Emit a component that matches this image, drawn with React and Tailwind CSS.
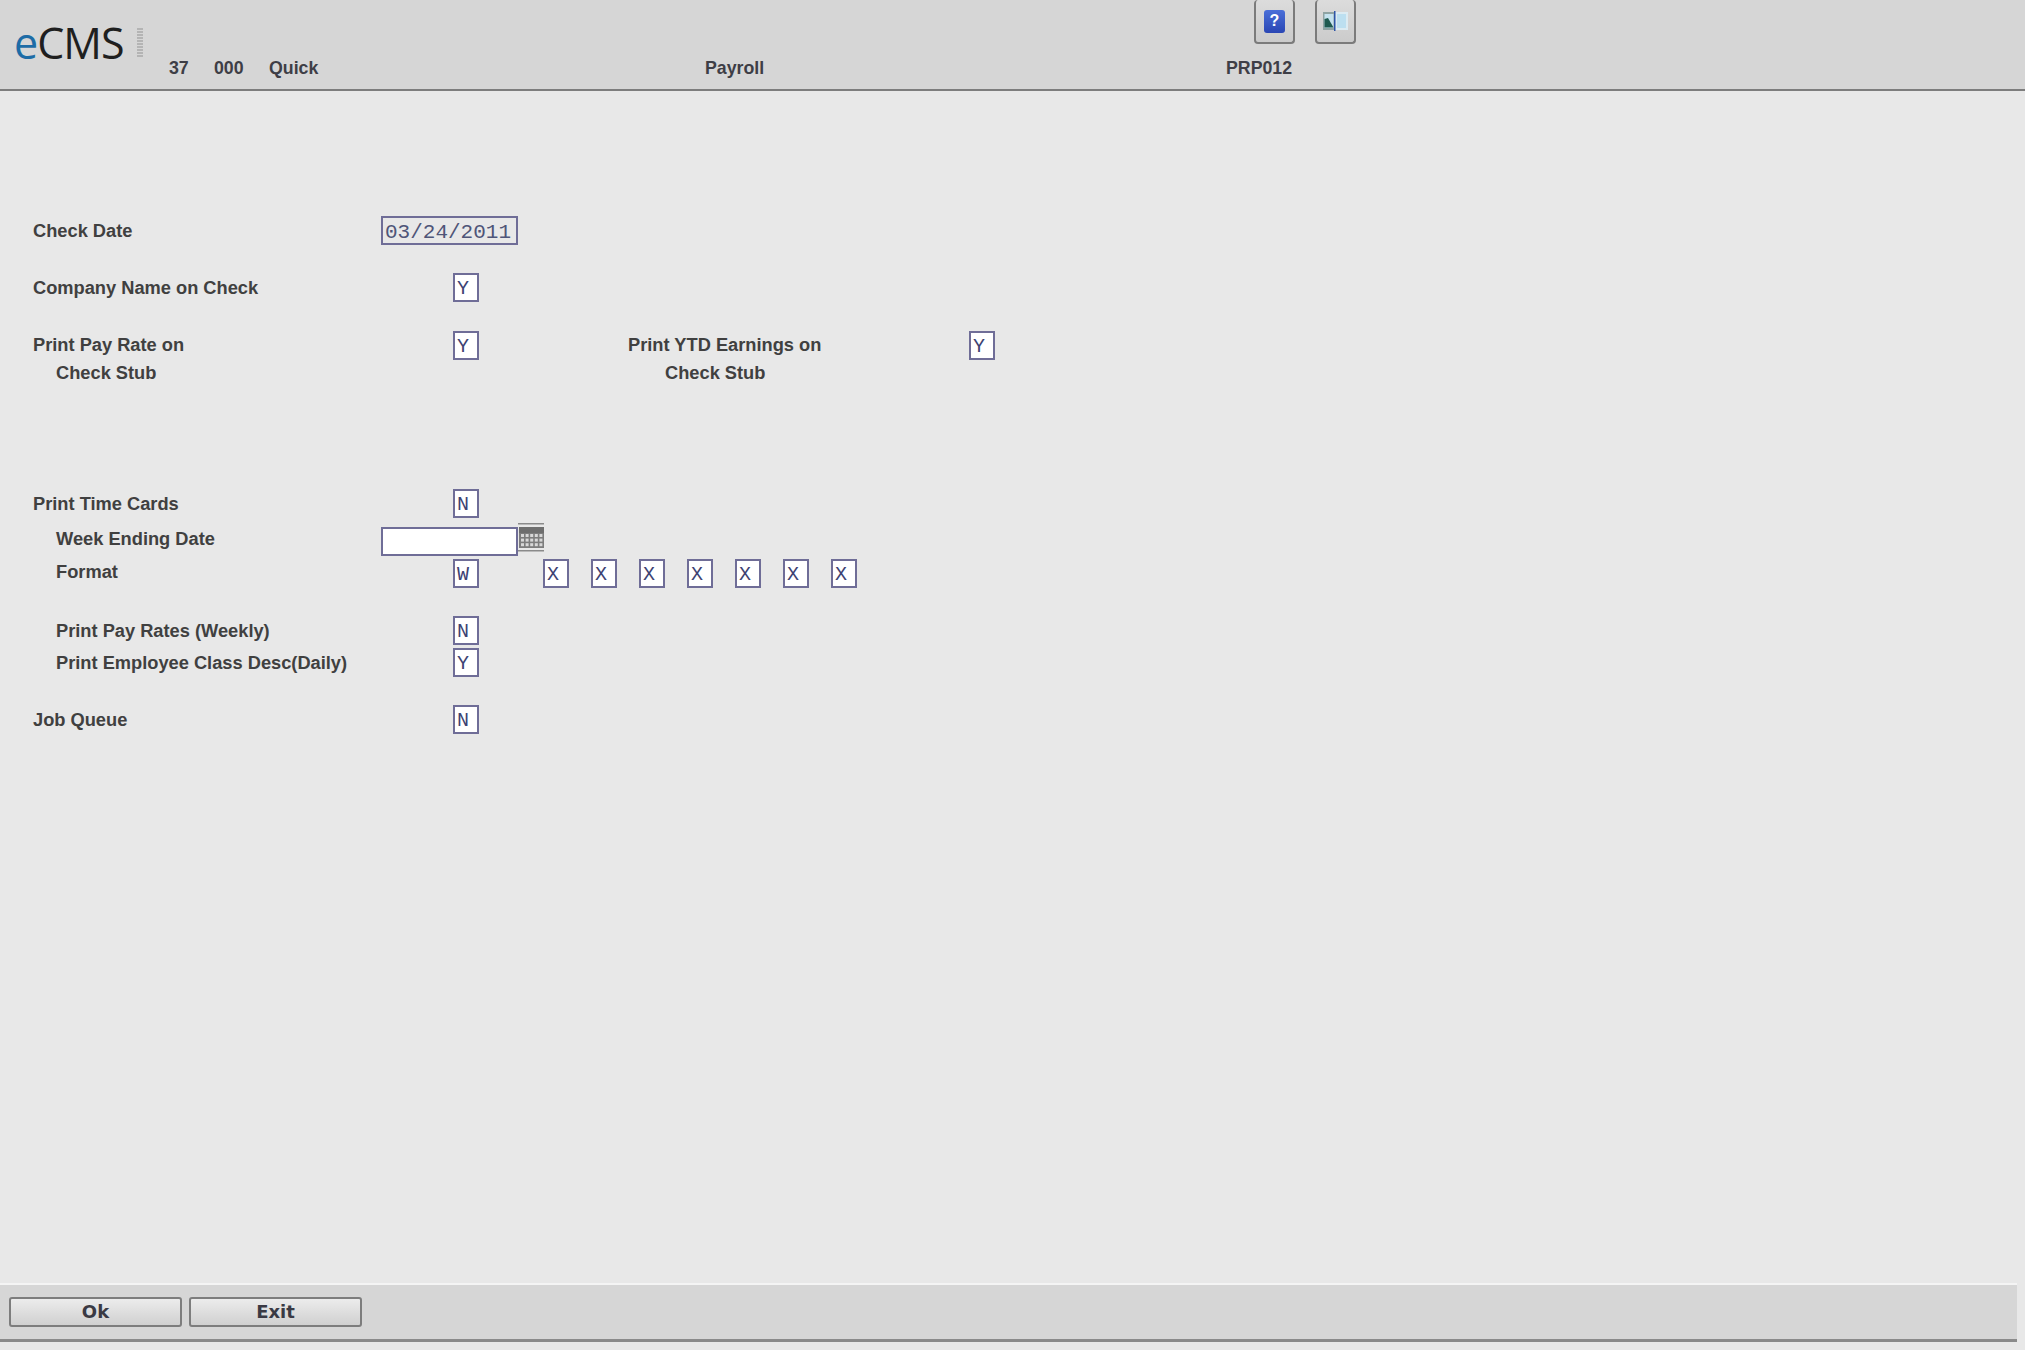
import React from "react";

const Box = ({ value, className = "" }) => (
  <div
    className={`w-[26px] h-[29px] shrink-0 border-2 border-[#6f6d97] bg-white pl-[2px] font-['Liberation_Mono',monospace] text-[20px] font-normal leading-[27px] text-[#3d4272] ${className}`}
  >
    {value}
  </div>
);

const DateBox = ({ value, className = "" }) => (
  <div
    className={`w-[137px] h-[29px] shrink-0 border-2 border-[#6f6d97] pl-[2px] font-['Liberation_Mono',monospace] text-[21px] font-normal leading-[29px] text-[#4f5578] ${className}`}
  >
    {value}
  </div>
);

const Label = ({ children, width = "w-[420px]", indent = false, className = "" }) => (
  <div className={`${width} shrink-0 ${indent ? "pl-[23px]" : ""} h-[29px] leading-[29px] ${className}`}>{children}</div>
);

const Row = ({ label, indent, gap, children, lift }) => (
  <div className={`flex ${gap}`}>
    <Label width="w-[348px]" indent={indent} className={lift ? "-mt-[3px]" : ""}>
      {label}
    </Label>
    {children}
  </div>
);

const CalendarIcon = () => (
  <svg width="26" height="30" viewBox="0 0 26 30" className="shrink-0 -mt-[4px]">
    <rect x="0" y="0" width="26" height="1.5" fill="#8a8a8a" />
    <rect x="1" y="4" width="25" height="6" fill="#6e6e6e" />
    <rect x="1" y="10" width="25" height="15" fill="#7d7d7d" />
    {[0, 1, 2, 3, 4].map((c) =>
      [0, 1, 2].map((r) => (
        <rect key={`${c}-${r}`} x={3 + c * 4.6} y={11 + r * 4.6} width="3" height="3" fill="#d8d8d8" />
      ))
    )}
    <rect x="0" y="27" width="26" height="1.5" fill="#8a8a8a" />
  </svg>
);

export default function App() {
  return (
    <div className="w-[2025px] h-[1350px] flex flex-col overflow-hidden bg-[#e8e8e8] font-['Liberation_Sans',sans-serif] text-[18.25px] font-bold text-[#404040]">
      {/* Header */}
      <div className="h-[91px] shrink-0 flex bg-[#d6d6d6] border-b-2 border-[#7d7d7d]">
        <div className="w-[169px] shrink-0 flex items-start pl-[14px] pt-[18px]">
          <div className="w-[123px] font-['Open_Sans',sans-serif] text-[43px] leading-[50px] font-[370] tracking-[-1px] text-[#1f1f1f]">
            <span className="text-[#1d6ca6]">e</span>CMS
          </div>
          <div className="w-[6px] h-[30px] mt-[10px] bg-[repeating-linear-gradient(to_bottom,#b4b4b4_0,#b4b4b4_2px,transparent_2px,transparent_3px)]" />
        </div>
        <div className="flex-1 flex flex-col">
          <div className="h-[44px] flex gap-[20px] pl-[1085px]">
            <div className="w-[41px] h-[44px] flex items-center justify-center rounded-[4px] border-2 border-t-0 border-[#7b7b7b] bg-gradient-to-b from-[#dcdcdc] to-[#cbcbcb]">
              <div className="w-[21px] h-[23px] flex items-center justify-center rounded-[3px] bg-gradient-to-b from-[#4a6fd8] to-[#2a46b4] font-bold text-[16px] text-white">
                ?
              </div>
            </div>
            <div className="w-[41px] h-[44px] flex items-center justify-center rounded-[4px] border-2 border-t-0 border-[#7b7b7b] bg-gradient-to-b from-[#dcdcdc] to-[#cbcbcb]">
              <svg width="25" height="20" viewBox="0 0 25 20">
                <rect x="0" y="1" width="12" height="18" fill="#8fa3a3" />
                <rect x="1.5" y="3" width="9" height="14" fill="#c4e2ef" />
                <path d="M1.5 16.5 L1.5 8 L5 7 L10.5 16.5 Z" fill="#1f5a50" />
                <rect x="12" y="1" width="13" height="18" fill="#dcebf2" />
                <rect x="14" y="3" width="9" height="14" fill="#bcdff0" />
                <rect x="11" y="0" width="1.5" height="20" fill="#2d55a8" />
              </svg>
            </div>
          </div>
          <div className="flex pt-[14px] leading-[20px] text-[17.75px] text-[#3e3e46]">
            <span className="w-[45px]">37</span>
            <span className="w-[55px]">000</span>
            <span className="w-[436px]">Quick</span>
            <span className="w-[521px]">Payroll</span>
            <span>PRP012</span>
          </div>
        </div>
      </div>

      {/* Form */}
      <div className="flex-1 pt-[125px] pl-[33px] flex flex-col">
        <Row label="Check Date">
          <DateBox value="03/24/2011" />
        </Row>
        <Row label="Company Name on Check" gap="mt-[28px]">
          <Box value="Y" className="ml-[72px]" />
        </Row>
        <div className="flex mt-[29px]">
          <div className="w-[420px] shrink-0 leading-[28px]">
            <div>Print Pay Rate on</div>
            <div className="pl-[23px]">Check Stub</div>
          </div>
          <Box value="Y" />
          <div className="w-[490px] shrink-0 pl-[149px] leading-[28px]">
            <div>Print YTD Earnings on</div>
            <div className="pl-[37px]">Check Stub</div>
          </div>
          <Box value="Y" />
        </div>
        <Row label="Print Time Cards" gap="mt-[102px]">
          <Box value="N" className="ml-[72px]" />
        </Row>
        <Row label="Week Ending Date" indent gap="mt-[9px]" lift>
          <DateBox value="" className="bg-white" />
          <CalendarIcon />
        </Row>
        <div className="flex mt-[3px]">
          <Label indent className="-mt-[2px]">
            Format
          </Label>
          <Box value="W" />
          <div className="flex gap-[22px] ml-[64px]">
            {[0, 1, 2, 3, 4, 5, 6].map((i) => (
              <Box key={i} value="X" />
            ))}
          </div>
        </div>
        <Row label="Print Pay Rates (Weekly)" indent gap="mt-[28px]">
          <Box value="N" className="ml-[72px]" />
        </Row>
        <Row label="Print Employee Class Desc(Daily)" indent gap="mt-[3px]">
          <Box value="Y" className="ml-[72px]" />
        </Row>
        <Row label="Job Queue" gap="mt-[28px]">
          <Box value="N" className="ml-[72px]" />
        </Row>
      </div>

      {/* Footer */}
      <div className="w-[2017px] h-[59px] shrink-0 mb-[8px] flex gap-[7px] pl-[9px] pt-[12px] bg-[#d6d6d6] border-t-2 border-b-[3px] border-t-[#f4f4f4] border-b-[#8a8a8a]">
        {["Ok", "Exit"].map((t) => (
          <button
            key={t}
            className="w-[173px] h-[30px] rounded-[3px] border-2 border-[#7d7d7d] bg-gradient-to-b from-[#ececec] to-[#d0d0d0] font-['DejaVu_Sans',sans-serif] text-[18px] font-bold leading-[26px] text-[#3a3a44]"
          >
            {t}
          </button>
        ))}
      </div>
    </div>
  );
}
